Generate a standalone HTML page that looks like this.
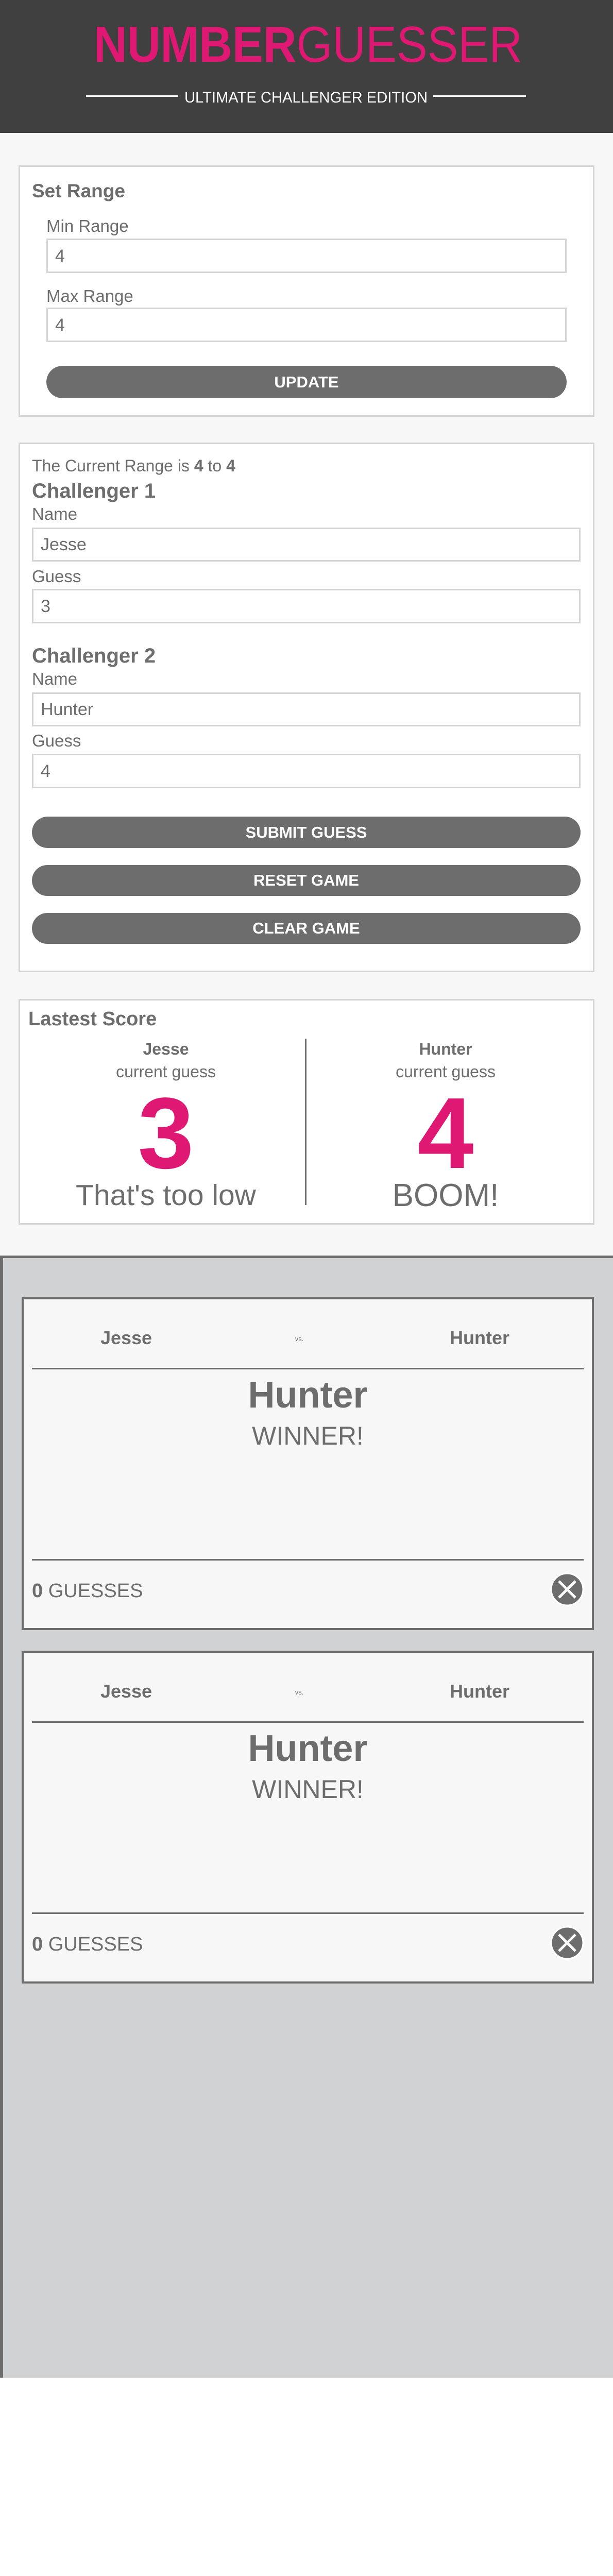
<!DOCTYPE html>
<html><head><meta charset="utf-8"><style>
*{margin:0;padding:0;box-sizing:border-box}
html{width:1190px;height:5188px;overflow:hidden}
body{width:1190px;height:5188px;position:relative;background:#fff;font-family:"Liberation Sans",sans-serif;color:#6d6d6d;overflow:hidden}
.a{position:absolute}
.top{left:0;top:258px;width:1190px;height:2181px;background:#f7f7f7}
.box{background:#fff;border:3px solid #d4d4d4}
.inp{position:absolute;border:3px solid #d4d4d4;background:#fff;font-size:34px;line-height:1;display:flex;align-items:center;padding-left:14px;color:#6d6d6d}
.btn{position:absolute;background:#6d6d6d;border-radius:32px;color:#fff;font-weight:bold;font-size:31px;display:flex;align-items:center;justify-content:center}
.lbl{position:absolute;font-size:33px;line-height:1;white-space:nowrap}
.h{position:absolute;font-weight:bold;line-height:1;white-space:nowrap}
.c{text-align:center}
.card{position:absolute;left:42px;width:1111px;height:646px;background:#f7f7f7;border:4px solid #6d6d6d;overflow:hidden}
</style></head><body>
<div class="a" style="left:0;top:0;width:1190px;height:258px;background:#404040"></div>
<svg class="a" style="left:0;top:0" width="1190" height="258">
<text x="182" y="120" font-family="Liberation Sans" font-size="98" fill="#df1873" textLength="832" lengthAdjust="spacingAndGlyphs"><tspan font-weight="bold">NUMBER</tspan><tspan>GUESSER</tspan></text>
<rect x="167" y="185" width="178" height="3" fill="#fff"/>
<rect x="841" y="185" width="180" height="3" fill="#fff"/>
<text x="358" y="199" font-family="Liberation Sans" font-size="30" fill="#fff" textLength="472" lengthAdjust="spacingAndGlyphs">ULTIMATE CHALLENGER EDITION</text>
</svg>
<div class="a top"></div>

<div class="a box" style="left:36px;top:321px;width:1118px;height:488px"></div>
<div class="h" style="left:62px;top:352px;font-size:37px">Set Range</div>
<div class="lbl" style="left:90px;top:422px">Min Range</div>
<div class="inp" style="left:90px;top:463px;width:1010px;height:67px">4</div>
<div class="lbl" style="left:90px;top:558px">Max Range</div>
<div class="inp" style="left:90px;top:597px;width:1010px;height:67px">4</div>
<div class="btn" style="left:90px;top:710px;width:1010px;height:63px">UPDATE</div>

<div class="a box" style="left:36px;top:859px;width:1118px;height:1028px"></div>
<div class="lbl" style="left:62px;top:888px;font-size:32px">The Current Range is <b>4</b> to <b>4</b></div>
<div class="h" style="left:62px;top:933px;font-size:40px">Challenger 1</div>
<div class="lbl" style="left:62px;top:981px">Name</div>
<div class="inp" style="left:62px;top:1024px;width:1065px;height:66px">Jesse</div>
<div class="lbl" style="left:62px;top:1102px">Guess</div>
<div class="inp" style="left:62px;top:1143px;width:1065px;height:67px">3</div>
<div class="h" style="left:62px;top:1253px;font-size:40px">Challenger 2</div>
<div class="lbl" style="left:62px;top:1301px">Name</div>
<div class="inp" style="left:62px;top:1344px;width:1065px;height:66px">Hunter</div>
<div class="lbl" style="left:62px;top:1421px">Guess</div>
<div class="inp" style="left:62px;top:1463px;width:1065px;height:67px">4</div>
<div class="btn" style="left:62px;top:1585px;width:1065px;height:61px">SUBMIT GUESS</div>
<div class="btn" style="left:62px;top:1679px;width:1065px;height:60px">RESET GAME</div>
<div class="btn" style="left:62px;top:1772px;width:1065px;height:60px">CLEAR GAME</div>

<div class="a box" style="left:36px;top:1939px;width:1118px;height:438px"></div>
<div class="h" style="left:55px;top:1959px;font-size:38px">Lastest Score</div>
<div class="h c" style="left:122px;top:2020px;width:400px;font-size:32px">Jesse</div>
<div class="lbl c" style="left:122px;top:2064px;width:400px;font-size:32px">current guess</div>
<div class="h c" style="left:122px;top:2102px;width:400px;font-size:196px;color:#df1873">3</div>
<div class="lbl c" style="left:72px;top:2292px;width:500px;font-size:57px">That's too low</div>
<div class="a" style="left:592px;top:2016px;width:3px;height:323px;background:#6d6d6d"></div>
<div class="h c" style="left:665px;top:2020px;width:400px;font-size:32px">Hunter</div>
<div class="lbl c" style="left:665px;top:2064px;width:400px;font-size:32px">current guess</div>
<div class="h c" style="left:665px;top:2102px;width:400px;font-size:196px;color:#df1873">4</div>
<div class="lbl c" style="left:615px;top:2290px;width:500px;font-size:62px">BOOM!</div>

<div class="a" style="left:0;top:2437px;width:1190px;height:2178px;background:#d1d2d4;border-top:5px solid #6d6d6d;border-left:6px solid #6d6d6d"></div>

<div class="card" style="top:2518px">
<div class="h c" style="left:44px;top:57px;width:310px;font-size:36px">Jesse</div>
<div class="lbl c" style="left:500px;top:70px;width:70px;font-size:13px">vs.</div>
<div class="h c" style="left:730px;top:57px;width:310px;font-size:36px">Hunter</div>
<div class="a" style="left:16px;top:133px;width:1071px;height:3px;background:#6d6d6d"></div>
<div class="h c" style="left:0;top:150px;width:1103px;font-size:72px">Hunter</div>
<div class="lbl c" style="left:0;top:240px;width:1103px;font-size:50px">WINNER!</div>
<div class="a" style="left:16px;top:504px;width:1071px;height:3px;background:#6d6d6d"></div>
<div class="lbl" style="left:16px;top:547px;font-size:38px"><b>0</b> GUESSES</div>
<svg class="a" style="left:1020px;top:528px" width="70" height="70"><circle cx="35" cy="35" r="31" fill="#6d6d6d" stroke="#fff" stroke-width="3"/><path d="M19 19L51 51M51 19L19 51" stroke="#fff" stroke-width="5"/></svg>
</div>

<div class="card" style="top:3204px">
<div class="h c" style="left:44px;top:57px;width:310px;font-size:36px">Jesse</div>
<div class="lbl c" style="left:500px;top:70px;width:70px;font-size:13px">vs.</div>
<div class="h c" style="left:730px;top:57px;width:310px;font-size:36px">Hunter</div>
<div class="a" style="left:16px;top:133px;width:1071px;height:3px;background:#6d6d6d"></div>
<div class="h c" style="left:0;top:150px;width:1103px;font-size:72px">Hunter</div>
<div class="lbl c" style="left:0;top:240px;width:1103px;font-size:50px">WINNER!</div>
<div class="a" style="left:16px;top:504px;width:1071px;height:3px;background:#6d6d6d"></div>
<div class="lbl" style="left:16px;top:547px;font-size:38px"><b>0</b> GUESSES</div>
<svg class="a" style="left:1020px;top:528px" width="70" height="70"><circle cx="35" cy="35" r="31" fill="#6d6d6d" stroke="#fff" stroke-width="3"/><path d="M19 19L51 51M51 19L19 51" stroke="#fff" stroke-width="5"/></svg>
</div>
</body></html>
